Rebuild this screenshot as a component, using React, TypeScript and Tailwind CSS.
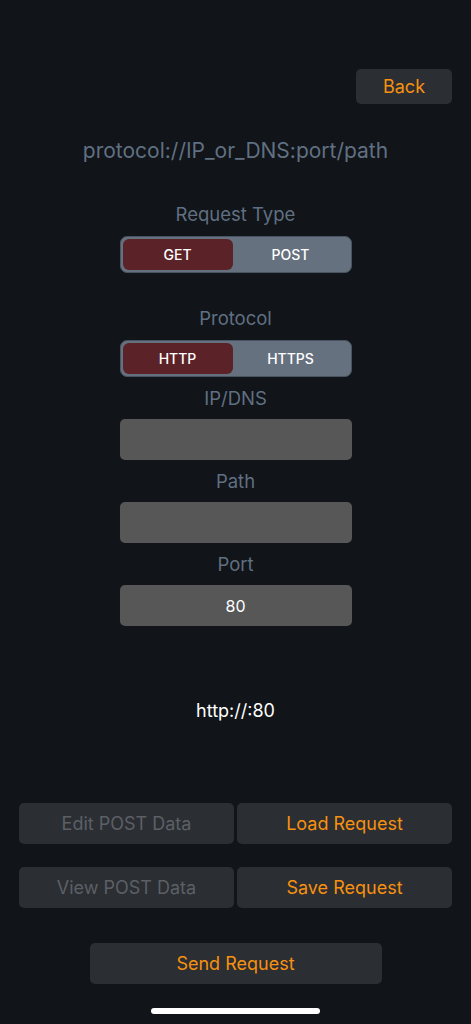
import * as React from "react";

function Segmented({ options, selected }: { options: string[]; selected: number }) {
	return (
		<div className="mx-auto flex h-[37px] w-[232px] rounded-[7px] border border-[#4a5361] bg-[#667180] p-[2px]">
			{options.map((opt, i) => (
				<div
					key={opt}
					className={
						i === selected
							? "flex w-[110px] items-center justify-center rounded-[6px] bg-[#5b2328] text-[14px] font-medium text-white"
							: "flex flex-1 items-center justify-center text-[14px] font-medium text-white"
					}
				>
					{opt}
				</div>
			))}
		</div>
	);
}

function Field({ label, value }: { label: string; value?: string }) {
	return (
		<div className="mt-[10px] flex flex-col items-center">
			<div className="h-[22px] text-[18.5px] leading-[22px] text-[#607082]">{label}</div>
			<div className="mt-[10px] flex h-[41px] w-[232px] items-center justify-center rounded-[5px] bg-[#575757] text-[16px] text-white">
				{value}
			</div>
		</div>
	);
}

function ActionButton({ text, disabled }: { text: string; disabled?: boolean }) {
	return (
		<button
			className={
				disabled
					? "flex h-[41px] flex-1 items-center justify-center rounded-[5px] bg-[#2b2e33] text-[18px] text-[#5c6066]"
					: "flex h-[41px] flex-1 items-center justify-center rounded-[5px] bg-[#2b2e33] text-[18px] text-[#f7910f]"
			}
		>
			{text}
		</button>
	);
}

export default function App() {
	return (
		<div
			className="flex h-[1024px] w-full flex-col bg-[#111418] pt-[69px]"
			style={{ fontFamily: "Inter, 'Noto Sans', sans-serif" }}
		>
			<div className="flex justify-end pr-[19px]">
				<button className="h-[35px] w-[96px] rounded-[5px] bg-[#2b2e33] text-[18px] text-[#f7910f]">
					Back
				</button>
			</div>

			<div className="mt-[35px] h-[24px] text-center text-[21px] leading-[24px] text-[#607082]">
				protocol://IP_or_DNS:port/path
			</div>

			<div className="mt-[40px] h-[22px] text-center text-[18.5px] leading-[22px] text-[#607082]">
				Request Type
			</div>
			<div className="mt-[11px]">
				<Segmented options={["GET", "POST"]} selected={0} />
			</div>

			<div className="mt-[34px] h-[22px] text-center text-[18.5px] leading-[22px] text-[#607082]">
				Protocol
			</div>
			<div className="mt-[11px]">
				<Segmented options={["HTTP", "HTTPS"]} selected={0} />
			</div>

			<Field label="IP/DNS" />
			<Field label="Path" />
			<Field label="Port" value="80" />

			<div className="mt-[74px] h-[22px] text-center text-[18px] leading-[22px] text-white">
				http://:80
			</div>

			<div className="mt-[81px] flex gap-[3px] px-[19px]">
				<ActionButton text="Edit POST Data" disabled />
				<ActionButton text="Load Request" />
			</div>
			<div className="mt-[23px] flex gap-[3px] px-[19px]">
				<ActionButton text="View POST Data" disabled />
				<ActionButton text="Save Request" />
			</div>

			<div className="mt-[35px] flex justify-center">
				<button className="h-[41px] w-[292px] rounded-[5px] bg-[#2b2e33] text-[18px] text-[#f7910f]">
					Send Request
				</button>
			</div>

			<div className="mt-[24px] flex justify-center">
				<div className="h-[6px] w-[169px] rounded-full bg-white" />
			</div>
		</div>
	);
}
